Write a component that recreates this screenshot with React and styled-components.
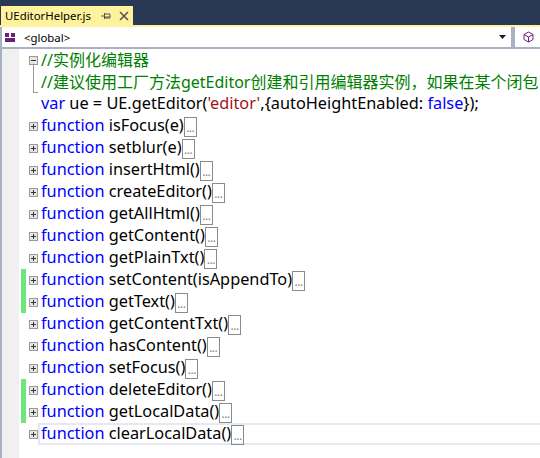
import React from 'react';
import styled, { createGlobalStyle } from 'styled-components';

const Global = createGlobalStyle`
  html, body { margin: 0; padding: 0; background: #fff; overflow: hidden; }
`;
const Win = styled.div`
  width: 540px; height: 458px; display: flex; flex-direction: column; overflow: hidden;
  background: #293955; font-family: "Noto Sans", "Noto Sans CJK SC", sans-serif;
`;
const TabStrip = styled.div`
  height: 25px; flex: none; padding: 6px 0 0 1px; box-sizing: border-box; display: flex;
`;
const Tab = styled.div`
  width: 132px; height: 19px; background: #fff29d; display: flex; align-items: center;
  padding-left: 4px; box-sizing: border-box; font-size: 11.4px; color: #000; gap: 10px;
`;
const TabIcons = styled.div`display: flex; align-items: center; gap: 8px;`;
const Accent = styled.div`height: 2px; flex: none; background: #fff29d;`;
const NavBar = styled.div`
  height: 22px; flex: none; padding: 0 0 2px 2px; box-sizing: border-box;
  display: flex; gap: 4px; background: #a9b2c4;
`;
const Combo = styled.div`
  flex: ${p => p.$grow ? 1 : 'none'}; width: ${p => p.$grow ? 'auto' : '25px'}; background: #fff;
  display: flex; align-items: center; padding: ${p => p.$grow ? '0 4px 0 3px' : '0 0 0 8px'}; box-sizing: border-box;
  font-size: 11.4px; gap: 8px; justify-content: ${p => p.$grow ? 'space-between' : 'flex-start'};
`;
const ComboLeft = styled.div`display: flex; align-items: center; gap: 8px;`;
const Sliver = styled.span`
  width: 6px; height: 6px; border: 1px solid #c08040; border-radius: 50%; flex: none; margin-left: -2px;
`;
const Body = styled.div`flex: 1; display: flex; min-height: 0; background: #fff;`;
const Gutter = styled.div`width: 2px; flex: none; background: #a9b2c4;`;
const Margin = styled.div`width: 17px; flex: none; background: #f0f0f0;`;
const Editor = styled.div`flex: 1; background: #fff; padding: 0 0 0 2px; min-width: 0;`;
const Row = styled.div`
  height: 22px; display: flex; align-items: center; white-space: nowrap; font-size: 16.3px;
  color: #000; box-sizing: border-box;
`;
const Code = styled.span`flex: none; margin-bottom: 2px;`;
const Change = styled.div`
  width: 5px; height: 100%; flex: none; margin-right: 3px; background: ${p => p.$on ? '#6ee67c' : 'transparent'};
`;
const FoldCol = styled.div`width: 12px; flex: none;`;
const Toggle = styled.div`
  width: 9px; height: 9px; border: 1px solid #9a9a9a; background: #e6e6e6; flex: none; margin-right: 3px;
  position: relative; box-sizing: border-box;
  &::before { content: ""; position: absolute; left: 1px; right: 1px; top: 3px; height: 1px; background: #333; }
  &::after { content: ${p => p.$minus ? 'none' : '""'}; position: absolute; top: 1px; bottom: 1px; left: 3px; width: 1px; background: #333; }
`;
const FoldLine = styled.div`
  width: 5px; height: 22px; margin: 0 3px 0 4px; border-left: 1px solid #9a9a9a; flex: none; align-self: flex-start;
  border-bottom: 1px solid #9a9a9a; box-sizing: border-box; position: relative;
  &::before { content: ""; position: absolute; left: -1px; top: -6px; height: 6px; width: 1px; background: #9a9a9a; }
`;
const Kw = styled.span`color: #0000ff;`;
const Cm = styled.span`color: #008000; font-size: 16px;`;
const Str = styled.span`color: #a31515;`;
const Collapsed = styled.span`
  display: block; width: 13px; height: 20px; border: 1px solid #8a8a8a; box-sizing: border-box; margin-top: 2px;
  color: #888; font-size: 12px; line-height: 20px; text-align: center; flex: none; letter-spacing: -0.5px;
`;
const CurrentLine = styled.div`
  display: flex; align-items: center; flex: 1; height: 22px; border: 2px solid #e8e8f4; border-right: 0;
  box-sizing: border-box; margin-left: -3px; padding-left: 1px;
`;

const fns = [
  ['isFocus(e)', 0], ['setblur(e)', 0], ['insertHtml()', 0], ['createEditor()', 0],
  ['getAllHtml()', 0], ['getContent()', 0], ['getPlainTxt()', 0], ['setContent(isAppendTo)', 1],
  ['getText()', 1], ['getContentTxt()', 0], ['hasContent()', 0], ['setFocus()', 0],
  ['deleteEditor()', 1], ['getLocalData()', 1],
];

const Pin = () => (
  <svg width="10" height="10" viewBox="0 0 10 10"><path d="M0 5h3M3.500 2v6M3.500 3h5.500v4H3.500M3.500 6h5.500" fill="none" stroke="#555" /></svg>
);
const Close = () => (
  <svg width="10" height="10" viewBox="0 0 10 10"><path d="M1 1l8 8M9 1l-8 8" stroke="#555" strokeWidth="1.6" /></svg>
);
const Scope = () => (
  <svg width="11" height="9" viewBox="0 0 11 9"><path d="M0 0h4v4H0zM6 0h4v4H6zM0 5h10v4H0z" fill="#68217a" /></svg>
);
const Cube = () => (
  <svg width="11" height="12" viewBox="0 0 11 12" style={{ flex: 'none' }}><path d="M5.500 1l4.500 2.500v5L5.500 11 1 8.500v-5zM1 3.500L5.500 6 10 3.500M5.500 6v5" fill="none" stroke="#68217a" /></svg>
);
const Caret = () => (
  <svg width="8" height="4" viewBox="0 0 8 4"><path d="M0 0h7L3.500 4z" fill="#1e1e1e" /></svg>
);

export default function App() {
  return (
    <Win>
      <Global />
      <TabStrip>
        <Tab>UEditorHelper.js<TabIcons><Pin /><Close /></TabIcons></Tab>
      </TabStrip>
      <Accent />
      <NavBar>
        <Combo $grow><ComboLeft><Scope />{'<global>'}</ComboLeft><Caret /></Combo>
        <Combo><Cube /><Sliver /></Combo>
      </NavBar>
      <Body>
        <Gutter />
        <Margin />
        <Editor>
          <Row><Change /><Toggle $minus /><Code><Cm>//实例化编辑器</Cm></Code></Row>
          <Row><Change /><FoldLine /><Code><Cm>//建议使用工厂方法getEditor创建和引用编辑器实例，如果在某个闭包</Cm></Code></Row>
          <Row><Change /><FoldCol /><Code><Kw>var</Kw> ue = UE.getEditor(<Str>'editor'</Str>,{'{'}autoHeightEnabled: <Kw>false</Kw>{'}'});</Code></Row>
          {fns.map(([name, on]) => (
            <Row key={name}>
              <Change $on={!!on} /><Toggle /><Code><Kw>function</Kw> {name}</Code><Collapsed>...</Collapsed>
            </Row>
          ))}
          <Row>
            <Change /><Toggle />
            <CurrentLine><Code><Kw>function</Kw> clearLocalData()</Code><Collapsed>...</Collapsed></CurrentLine>
          </Row>
        </Editor>
      </Body>
    </Win>
  );
}
